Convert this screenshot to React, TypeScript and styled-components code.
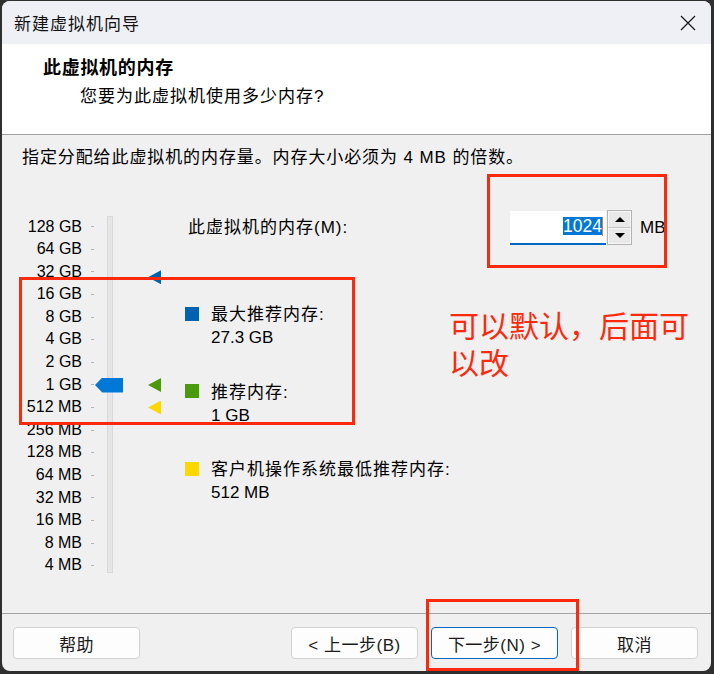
import React from "react";
import styled, { createGlobalStyle } from "styled-components";

const ROW = 22.6;
const TOP_MB = 131072;

const scaleLabels = [
  "128 GB", "64 GB", "32 GB", "16 GB", "8 GB", "4 GB", "2 GB", "1 GB",
  "512 MB", "256 MB", "128 MB", "64 MB", "32 MB", "16 MB", "8 MB", "4 MB",
];

// center of a value on the log scale, measured from the top of the rows
const centerOf = (mb: number) => (Math.log2(TOP_MB / mb) + 0.5) * ROW;

const markers = [
  { mb: 27955, color: "#0063b1" },
  { mb: 1024, color: "#4b9a0c" },
  { mb: 512, color: "#fdd700" },
];

const legend = [
  { color: "#0063b1", label: "最大推荐内存:", value: "27.3 GB" },
  { color: "#4b9a0c", label: "推荐内存:", value: "1 GB" },
  { color: "#fdd800", label: "客户机操作系统最低推荐内存:", value: "512 MB" },
];

const GlobalStyle = createGlobalStyle`
  html, body {
    margin: 0;
    background: #2f2f2f;
  }
`;

export default function App() {
  const current = 1024;
  return (
    <>
      <GlobalStyle />
      <Window>
        <TitleBar>
          <Title>新建虚拟机向导</Title>
          <CloseIcon width="16" height="16" viewBox="0 0 16 16">
            <path d="M1 1 L15 15 M15 1 L1 15" stroke="#1a1a1a" strokeWidth="1.3" />
          </CloseIcon>
        </TitleBar>

        <Header>
          <HeaderTitle>此虚拟机的内存</HeaderTitle>
          <HeaderSub>您要为此虚拟机使用多少内存?</HeaderSub>
        </Header>

        <Body>
          <Instruction>指定分配给此虚拟机的内存量。内存大小必须为 4 MB 的倍数。</Instruction>
          <Main>
            <Scale>
              <LabelCol>
                {scaleLabels.map((l) => (
                  <ScaleLabel key={l}>{l}</ScaleLabel>
                ))}
              </LabelCol>
              <TickCol>
                {scaleLabels.map((l) => (
                  <TickRow key={l}>
                    <Tick />
                  </TickRow>
                ))}
              </TickCol>
              <TrackCol>
                <Track />
                <Thumb style={{ top: centerOf(current) - 7.5 }} />
              </TrackCol>
              <MarkerCol>
                {markers.map((m) => (
                  <Marker key={m.mb} $color={m.color} style={{ top: centerOf(m.mb) - 7 }} />
                ))}
              </MarkerCol>
            </Scale>

            <RightCol>
              <InputRow>
                <FieldLabel>此虚拟机的内存(M):</FieldLabel>
                <NumberBox>
                  <Selected>1024</Selected>
                  <Caret />
                </NumberBox>
                <Spin>
                  <SpinButton>
                    <Arrow $up />
                  </SpinButton>
                  <SpinButton>
                    <Arrow />
                  </SpinButton>
                </Spin>
                <Unit>MB</Unit>
              </InputRow>

              <Legend>
                {legend.map((item) => (
                  <LegendItem key={item.label}>
                    <LegendHead>
                      <Swatch $color={item.color} />
                      <LegendLabel>{item.label}</LegendLabel>
                    </LegendHead>
                    <LegendValue>{item.value}</LegendValue>
                  </LegendItem>
                ))}
              </Legend>
            </RightCol>
          </Main>
        </Body>

        <Footer>
          <Button>帮助</Button>
          <Button $push>&lt; 上一步(B)</Button>
          <Button $primary>下一步(N) &gt;</Button>
          <Button>取消</Button>
        </Footer>

        <Annotation $x={485} $y={173} $w={180} $h={94} />
        <Annotation $x={17} $y={276} $w={336} $h={148} />
        <Annotation $x={424} $y={598} $w={153} $h={72} />
        <Note>可以默认，后面可以改</Note>
      </Window>
    </>
  );
}

const Window = styled.div`
  position: relative;
  width: 709px;
  height: 670px;
  margin: 1px 3px 3px 2px;
  border-radius: 8px;
  overflow: hidden;
  background: #f0f0f0;
  display: flex;
  flex-direction: column;
  font-family: "Liberation Sans", "Noto Sans CJK SC", sans-serif;
  color: #000;
`;

const TitleBar = styled.div`
  height: 43px;
  flex: none;
  display: flex;
  align-items: center;
  justify-content: space-between;
  padding: 0 15px 0 12px;
  background: #eef0f6;
`;

const Title = styled.div`
  font-size: 17px;
  letter-spacing: 1px;
  color: #111;
`;

const CloseIcon = styled.svg`
  display: block;
`;

const Header = styled.div`
  box-sizing: border-box;
  height: 91px;
  flex: none;
  padding: 12px 0 0 41px;
  background: #fff;
  border-bottom: 1px solid #a0a0a0;
`;

const HeaderTitle = styled.div`
  font-size: 18px;
  font-weight: bold;
  line-height: 24px;
  letter-spacing: 0.7px;
`;

const HeaderSub = styled.div`
  margin: 5px 0 0 37px;
  font-size: 17px;
  line-height: 24px;
  letter-spacing: 1px;
`;

const Body = styled.div`
  flex: 1;
  padding-top: 11px;
`;

const Instruction = styled.div`
  padding-left: 20px;
  font-size: 17px;
  line-height: 24px;
  letter-spacing: 0.9px;
`;

const Main = styled.div`
  display: flex;
  margin-top: 40px;
`;

const Scale = styled.div`
  display: flex;
  padding-top: 5.5px;
`;

const LabelCol = styled.div`
  width: 80px;
  display: flex;
  flex-direction: column;
`;

const ScaleLabel = styled.div`
  height: ${ROW}px;
  line-height: ${ROW}px;
  text-align: right;
  font-size: 16px;
  white-space: nowrap;
`;

const TickCol = styled.div`
  width: 3px;
  margin-left: 9px;
  display: flex;
  flex-direction: column;
`;

const TickRow = styled.div`
  height: ${ROW}px;
  display: flex;
  align-items: center;
`;

const Tick = styled.div`
  width: 3px;
  height: 1px;
  background: #b4b4b4;
`;

const TrackCol = styled.div`
  position: relative;
  width: 6px;
  margin-left: 13px;
  height: ${ROW * 16}px;
`;

const Track = styled.div`
  box-sizing: border-box;
  margin-top: 0.5px;
  width: 6px;
  height: 357px;
  background: #e6e6e6;
  border: 1px solid #d8d8d8;
`;

const Thumb = styled.div`
  position: absolute;
  left: -12px;
  width: 28px;
  height: 15px;
  background: #0078d7;
  clip-path: polygon(0 50%, 26% 0, 100% 0, 100% 100%, 26% 100%);
`;

const MarkerCol = styled.div`
  position: relative;
  width: 13px;
  margin-left: 35px;
`;

const Marker = styled.div<{ $color: string }>`
  position: absolute;
  left: 0;
  width: 13px;
  height: 14px;
  background: ${(p) => p.$color};
  clip-path: polygon(0 50%, 100% 0, 100% 100%);
`;

const RightCol = styled.div`
  margin-left: 24px;
  display: flex;
  flex-direction: column;
`;

const InputRow = styled.div`
  display: grid;
  grid-template-columns: 325px 96px 26px auto;
  align-items: start;
  height: 35px;
`;

const FieldLabel = styled.div`
  padding-left: 3px;
  font-size: 17px;
  line-height: 35px;
  letter-spacing: 1px;
  white-space: nowrap;
`;

const NumberBox = styled.div`
  box-sizing: border-box;
  margin-top: 1px;
  height: 34px;
  background: #fff;
  border-bottom: 2px solid #0067c0;
  display: flex;
  align-items: center;
  justify-content: flex-end;
  padding-right: 3px;
  padding-bottom: 2px;
`;

const Selected = styled.span`
  background: #0078d7;
  color: #fff;
  font-size: 17.5px;
  line-height: 18px;
  height: 18px;
`;

const Caret = styled.span`
  width: 1px;
  height: 19px;
  background: #d9822b;
`;

const Spin = styled.div`
  box-sizing: border-box;
  height: 35px;
  margin-left: 1px;
  border: 1px solid #b3b3b3;
  display: flex;
  flex-direction: column;
  background: #e9e9e9;
`;

const SpinButton = styled.div`
  flex: 1;
  display: flex;
  align-items: center;
  justify-content: center;
  border: 1px solid #f6f6f6;
  border-bottom-color: #c4c4c4;
  &:last-child {
    border-bottom-color: #f6f6f6;
  }
`;

const Arrow = styled.div<{ $up?: boolean }>`
  width: 0;
  height: 0;
  border-left: 5px solid transparent;
  border-right: 5px solid transparent;
  ${(p) => (p.$up ? "border-bottom: 5px solid #000;" : "border-top: 5px solid #000;")}
`;

const Unit = styled.div`
  margin-left: 8px;
  font-size: 17px;
  line-height: 35px;
`;

const Legend = styled.div`
  margin-top: 55px;
  display: flex;
  flex-direction: column;
  gap: 27.5px;
`;

const LegendItem = styled.div`
  display: flex;
  flex-direction: column;
`;

const LegendHead = styled.div`
  display: flex;
  align-items: center;
  height: 25px;
`;

const Swatch = styled.div<{ $color: string }>`
  width: 14px;
  height: 14px;
  margin-top: 2px;
  background: ${(p) => p.$color};
`;

const LegendLabel = styled.div`
  margin-left: 12px;
  font-size: 17px;
  letter-spacing: 1px;
  white-space: nowrap;
`;

const LegendValue = styled.div`
  margin-left: 26px;
  font-size: 17px;
  line-height: 25px;
`;

const Footer = styled.div`
  box-sizing: border-box;
  height: 58px;
  flex: none;
  border-top: 1px solid #a3a3a3;
  padding: 13px 13px 0 11px;
  display: flex;
  gap: 13px;
`;

const Button = styled.div<{ $primary?: boolean; $push?: boolean }>`
  box-sizing: border-box;
  width: 127px;
  height: 32px;
  display: flex;
  align-items: center;
  justify-content: center;
  background: #fdfdfd;
  border: 1px solid ${(p) => (p.$primary ? "#0067c0" : "#d2d2d2")};
  border-radius: 4px;
  font-size: 17px;
  letter-spacing: 0.5px;
  color: #1b1b1b;
  ${(p) => (p.$push ? "margin-left: auto;" : "")}
`;

const Annotation = styled.div<{ $x: number; $y: number; $w: number; $h: number }>`
  position: absolute;
  left: ${(p) => p.$x}px;
  top: ${(p) => p.$y}px;
  width: ${(p) => p.$w}px;
  height: ${(p) => p.$h}px;
  box-sizing: border-box;
  border: 3px solid #fb2a0c;
`;

const Note = styled.div`
  position: absolute;
  left: 447px;
  top: 305px;
  width: 252px;
  font-family: "Noto Sans CJK SC", sans-serif;
  font-size: 30px;
  line-height: 37px;
  color: #fb2a0c;
`;
